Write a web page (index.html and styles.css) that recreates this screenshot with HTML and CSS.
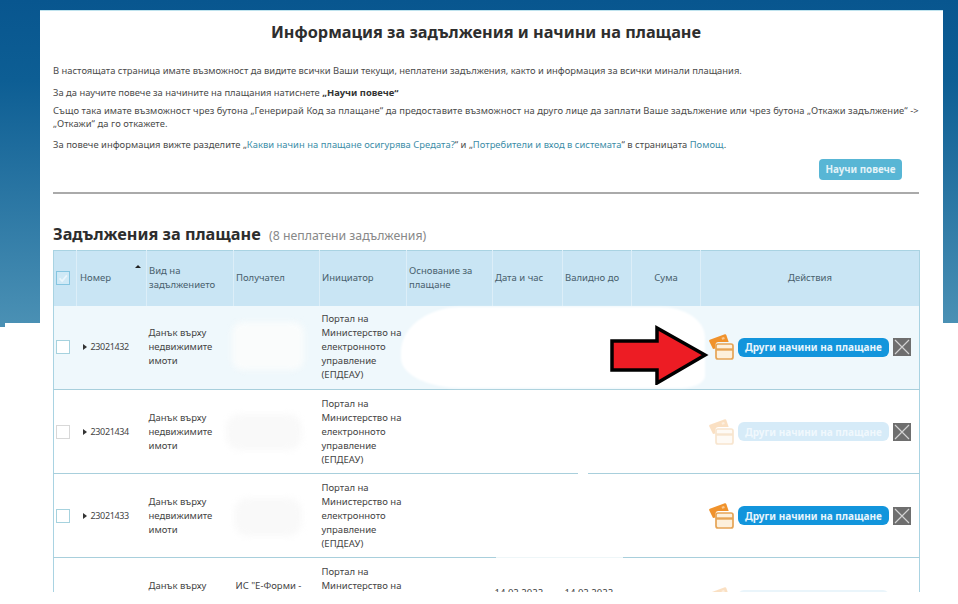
FILE: index.html
```html
<!DOCTYPE html>
<html lang="bg">
<head>
<meta charset="utf-8">
<title>Информация за задължения и начини на плащане</title>
<link rel="stylesheet" href="styles.css">
</head>
<body>
<svg class="defs" aria-hidden="true">
  <symbol id="card-icon" viewBox="0 0 25 26">
    <path d="M.8 5.800 15.800.3a1.200 1.200 0 0 1 1.500.7l2.400 7H9.500a3 3 0 0 0-3 3v3.500L4 15 .2 7.300a1.200 1.200 0 0 1 .6-1.500Z" fill="#f0922c"/>
    <path d="M12.500 3.800l2.600-.9.700 2-2.600.9Z" fill="#f9c98f"/>
    <rect x="7" y="10" width="17" height="15" rx="2" fill="#fdf0dc" stroke="#e6a455" stroke-width="1.700"/>
    <path d="M7 15.500h17" stroke="#e6a455" stroke-width="2.400"/>
  </symbol>
  <symbol id="x-icon" viewBox="0 0 18 18">
    <path d="M2 2l14 14M16 2 2 16" stroke="#d2d2d2" stroke-width="1.200"/>
  </symbol>
</svg>
<div class="page">
  <main class="card">
    <h1 class="title">Информация за задължения и начини на плащане</h1>
    <p class="para p1">В настоящата страница имате възможност да видите всички Ваши текущи, неплатени задължения, както и информация за всички минали плащания.</p>
    <p class="para p2">За да научите повече за начините на плащания натиснете <b>„Научи повече“</b></p>
    <p class="para p3">Също така имате възможност чрез бутона „Генерирай Код за плащане“ да предоставите възможност на друго лице да заплати Ваше задължение или чрез бутона „Откажи задължение“ -&gt; „Откажи“ да го откажете.</p>
    <p class="para p4">За повече информация вижте разделите „<a href="#">Какви начин на плащане осигурява Средата?</a>“ и „<a href="#">Потребители и вход в системата</a>“ в страницата <a href="#">Помощ</a>.</p>
    <div class="more-row"><a class="more" href="#">Научи повече</a></div>
    <hr class="rule">
    <h2 class="heading">Задължения за плащане <span class="count">(8 неплатени задължения)</span></h2>
    <table class="debts">
      <colgroup>
        <col class="c-check"><col class="c-num"><col class="c-type"><col class="c-rcpt"><col class="c-init"><col class="c-base"><col class="c-date"><col class="c-valid"><col class="c-sum"><col class="c-act">
      </colgroup>
      <thead>
        <tr>
          <th><span class="check check-head"><svg viewBox="0 0 14 14" aria-hidden="true"><path d="M3 7.500 6 10.500 11.500 4" fill="none" stroke="#eaf6fc" stroke-width="2"/></svg></span></th>
          <th class="sorted">Номер<span class="sort"></span></th>
          <th>Вид на задължението</th>
          <th>Получател</th>
          <th>Инициатор</th>
          <th>Основание за плащане</th>
          <th>Дата и час</th>
          <th>Валидно до</th>
          <th class="center">Сума</th>
          <th class="center">Действия</th>
        </tr>
      </thead>
      <tbody>
        <tr class="row row-active">
          <td><span class="check check-blue"></span></td>
          <td><span class="num"><i class="tri"></i>23021432</span></td>
          <td>Данък върху недвижимите имоти</td>
          <td></td>
          <td>Портал на Министерство на електронното управление (ЕПДЕАУ)</td>
          <td></td><td></td><td></td><td></td>
          <td><div class="actions">
            <svg class="pay-icon" aria-hidden="true"><use href="#card-icon"/></svg>
            <a class="pay" href="#">Други начини на плащане</a>
            <span class="cancel"><svg aria-hidden="true"><use href="#x-icon"/></svg></span>
          </div></td>
        </tr>
        <tr class="row">
          <td><span class="check"></span></td>
          <td><span class="num"><i class="tri"></i>23021434</span></td>
          <td>Данък върху недвижимите имоти</td>
          <td></td>
          <td>Портал на Министерство на електронното управление (ЕПДЕАУ)</td>
          <td></td><td></td><td></td><td></td>
          <td><div class="actions faded">
            <svg class="pay-icon" aria-hidden="true"><use href="#card-icon"/></svg>
            <a class="pay" href="#">Други начини на плащане</a>
            <span class="cancel"><svg aria-hidden="true"><use href="#x-icon"/></svg></span>
          </div></td>
        </tr>
        <tr class="row">
          <td><span class="check check-blue"></span></td>
          <td><span class="num"><i class="tri"></i>23021433</span></td>
          <td>Данък върху недвижимите имоти</td>
          <td></td>
          <td>Портал на Министерство на електронното управление (ЕПДЕАУ)</td>
          <td></td><td></td><td></td><td></td>
          <td><div class="actions">
            <svg class="pay-icon" aria-hidden="true"><use href="#card-icon"/></svg>
            <a class="pay" href="#">Други начини на плащане</a>
            <span class="cancel"><svg aria-hidden="true"><use href="#x-icon"/></svg></span>
          </div></td>
        </tr>
        <tr class="row">
          <td></td>
          <td></td>
          <td>Данък върху недвижимите имоти</td>
          <td>ИС "Е-Форми - Електронни услуги"</td>
          <td>Портал на Министерство на електронното управление (ЕПДЕАУ)</td>
          <td></td>
          <td>14.02.2022 10:15:32</td>
          <td>14.02.2022 23:59:59</td>
          <td></td>
          <td><div class="actions faded">
            <svg class="pay-icon" aria-hidden="true"><use href="#card-icon"/></svg>
            <a class="pay pay-clipped" href="#"></a>
            <span class="cancel cancel-none"></span>
          </div></td>
        </tr>
      </tbody>
    </table>
  </main>
  <div class="notch"></div>
  <div class="smear smear-main"></div>
  <div class="smear smear-r1"></div>
  <div class="smear smear-r2"></div>
  <div class="smear smear-r3"></div>
  <div class="smear smear-line1"></div>
  <div class="smear smear-line2"></div>
  <svg class="arrow" viewBox="0 0 100 60" aria-hidden="true"><path d="M3 16H48V3L96 30 48 58V45H3Z" fill="#ed1c24" stroke="#000" stroke-width="3.500" stroke-linejoin="miter"/></svg>
</div>
</body>
</html>
```
FILE: styles.css
```css
* { box-sizing: border-box; }
html, body { margin: 0; height: 604px; overflow: hidden; background: #fff; }
body { font-family: "Noto Sans", "Open Sans", sans-serif; color: #444; }
.defs { display: none; }
.page {
  position: relative;
  height: 592px;
  overflow: hidden;
  padding: 10px 15px 0 40px;
  background: linear-gradient(180deg, #08568f 0, #0d5e94 80px, #4a90b4 323px) no-repeat 0 0 / 100% 323px;
}
.notch { position: absolute; left: 0; top: 323px; width: 5px; height: 4px; background: #4a90b4; }
.card {
  background: #fff;
  border-top: 1px solid #bfe3ee;
  padding: 10px 24px 0 13px;
  height: 600px;
}
.title {
  margin: 0 0 21px;
  font-size: 16.300px;
  line-height: 22px;
  font-weight: 700;
  color: #2e2e2e;
  text-align: center;
}
.para { margin: 0; font-size: 9.400px; line-height: 14px; color: #4a4a4a; }
.para b { color: #333; }
.para a { color: #3c8da8; text-decoration: none; }
.p2 { margin-top: 8px; }
.p3 { margin-top: 4px; line-height: 13px; letter-spacing: .065px; }
.p4 { margin-top: 8px; letter-spacing: .025px; }
.more-row { display: flex; justify-content: flex-end; margin-top: 7px; padding-right: 17px; }
.more {
  width: 83px; height: 21px;
  display: flex; align-items: center; justify-content: center;
  background: #58b6d5; border-radius: 4px;
  color: #e3f3f8; font-size: 9.800px; font-weight: 700; text-decoration: none;
}
.rule { margin: 12px 0 0; border: 0; height: 2px; background: #aaa; }
.heading {
  margin: 29px 0 3px;
  font-size: 16.300px; line-height: 22px; font-weight: 700; color: #2d2d2d;
}
.count { margin-left: 4px; font-size: 12.300px; font-weight: 400; color: #888; }
.debts {
  width: 866px; table-layout: fixed; border-collapse: collapse;
  font-size: 9.500px; line-height: 14px; color: #444;
  border: 1px solid #a9d3e2; border-bottom: 0;
}
.c-check { width: 23px; } .c-num { width: 70px; } .c-type { width: 87px; }
.c-rcpt { width: 86px; } .c-init { width: 87px; } .c-base { width: 86px; }
.c-date { width: 70px; } .c-valid { width: 69px; } .c-sum { width: 69px; } .c-act { width: 219px; }
thead tr { height: 55px; background: #c9e5f4; }
th {
  font-weight: 400; text-align: left; padding: 0 2px;
  border-left: 1px solid #dceef8; color: #48606c;
}
th:first-child { border-left: 0; }
th.center { text-align: center; }
.sorted { position: relative; padding-left: 3px; }
.sort {
  position: absolute; right: 5px; top: 14px;
  border: 3px solid transparent; border-top: 0; border-bottom: 3px solid #222;
}
.row { height: 84px; border-bottom: 1px solid #a8cfdc; }
.row-active { background: #eff8fc; }
td { padding: 0 2px; vertical-align: middle; }
.check {
  display: block; width: 14px; height: 14px;
  background: #fff; border: 1px solid #d8d8d8;
}
.check svg { display: block; width: 12px; height: 12px; }
.check-blue { border-color: #a6d2de; }
.check-head { background: #cfe9f6; border-color: #85c5e0; }
.num { display: flex; align-items: center; gap: 4px; padding-left: 4px; white-space: nowrap; font-size: 9px; letter-spacing: -.35px; }
.tri { border: 3px solid transparent; border-left: 4px solid #333; border-right: 0; }
.actions { display: flex; align-items: center; justify-content: flex-end; gap: 4px; padding-right: 6px; }
.pay-icon { width: 25px; height: 26px; flex: none; }
.pay {
  width: 151px; height: 19px; display: flex; align-items: center; justify-content: center;
  background: #1295dc; border-radius: 6px; color: #e8f6fd;
  font-size: 10px; font-weight: 700; text-decoration: none; white-space: nowrap;
}
.cancel { width: 18px; height: 18px; flex: none; background: #6e6e6e; display: block; }
.cancel svg { display: block; width: 18px; height: 18px; }
.faded .pay-icon { opacity: .28; }
.faded .pay { background: #d6ebf8; color: #f0f8fd; }
.faded .pay-clipped { background: #eaf5fb; }
.cancel-none { background: transparent; }
.smear { position: absolute; }
.smear-main { left: 401px; top: 307px; width: 304px; height: 81px; background: #fff; border-radius: 60px 45px 24px 60px / 45px 30px 12px 30px; filter: blur(1px); }
.smear-r1 { left: 232px; top: 322px; width: 72px; height: 48px; background: #fafcfc; border-radius: 10px; filter: blur(3px); }
.smear-r2 { left: 226px; top: 414px; width: 76px; height: 36px; background: #f9f9f9; border-radius: 14px; filter: blur(3px); }
.smear-r3 { left: 234px; top: 498px; width: 68px; height: 38px; background: #f9f9f9; border-radius: 14px; filter: blur(3px); }
.smear-line1 { left: 578px; top: 472px; width: 10px; height: 3px; background: #fff; }
.smear-line2 { left: 496px; top: 557px; width: 127px; height: 3px; background: #fff; opacity: .8; }
.arrow { position: absolute; left: 609px; top: 325px; width: 100px; height: 60px; }
```
